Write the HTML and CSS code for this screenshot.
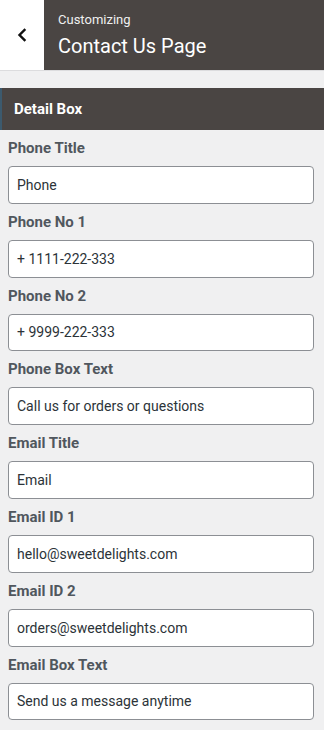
FILE: index.html
```html
<!DOCTYPE html>
<html lang="en">
<head>
<meta charset="utf-8">
<title>Contact Us Page</title>
<link rel="stylesheet" href="styles.css">
</head>
<body>
<header class="topbar">
  <button class="back" aria-label="Back">
    <svg width="12" height="14" viewBox="0 0 12 14"><path d="M8.5 2 L3.5 7 L8.5 12" fill="none" stroke="#111" stroke-width="2.4" stroke-linecap="square"/></svg>
  </button>
  <div class="title-wrap">
    <div class="sub">Customizing</div>
    <div class="title">Contact Us Page</div>
  </div>
</header>
<section class="panel">
  <h2 class="section-title">Detail Box</h2>
  <div class="fields">
    <div class="field"><label>Phone Title</label><input type="text" value="Phone"></div>
    <div class="field"><label>Phone No 1</label><input type="text" value="+ 1111-222-333"></div>
    <div class="field"><label>Phone No 2</label><input type="text" value="+ 9999-222-333"></div>
    <div class="field"><label>Phone Box Text</label><input type="text" value="Call us for orders or questions"></div>
    <div class="field"><label>Email Title</label><input type="text" value="Email"></div>
    <div class="field"><label>Email ID 1</label><input type="text" value="hello@sweetdelights.com"></div>
    <div class="field"><label>Email ID 2</label><input type="text" value="orders@sweetdelights.com"></div>
    <div class="field"><label>Email Box Text</label><input type="text" value="Send us a message anytime"></div>
  </div>
</section>
</body>
</html>
```
FILE: styles.css
```css
* { box-sizing: border-box; }
html, body { margin: 0; padding: 0; }
body {
  background: #f0f0f1;
  font-family: Roboto, "Noto Sans", sans-serif;
  width: 324px;
  overflow: hidden;
}
.topbar {
  display: flex;
  height: 71px;
  border-bottom: 1px solid #dcdcde;
}
.back {
  width: 44px;
  background: #fff;
  border: 0;
  padding: 0;
  display: flex;
  align-items: center;
  justify-content: center;
}
.title-wrap {
  flex: 1;
  background: #4a4543;
  color: #fff;
  padding: 12px 0 0 14px;
}
.sub {
  font-size: 13px;
  line-height: 16px;
  color: #f0f0f0;
}
.title {
  font-size: 20px;
  line-height: 26px;
  margin-top: 5px;
}
.panel { margin-top: 17px; }
.section-title {
  margin: 0;
  height: 42px;
  background: #4a4543;
  color: #fff;
  font-size: 15px;
  font-weight: 700;
  line-height: 42px;
  padding-left: 12px;
  border-left: 2px solid #3c5a6e;
}
.fields { padding: 8px 10px 0 8px; }
.field { display: flex; flex-direction: column; }
.field label {
  font-size: 15px;
  font-weight: 700;
  line-height: 20px;
  color: #50575e;
  margin-bottom: 8px;
}
.field input {
  height: 37.8px;
  border: 1px solid #8c8f94;
  border-radius: 4px;
  background: #fff;
  font-family: Roboto, "Noto Sans", sans-serif;
  font-size: 14px;
  color: #2c3338;
  padding: 0 8px;
  margin-bottom: 8px;
  width: 100%;
}
```
